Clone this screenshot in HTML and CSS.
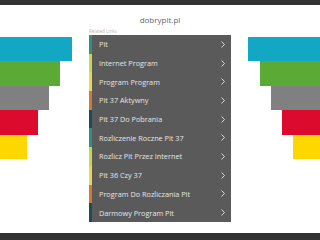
FILE: index.html
```html
<!DOCTYPE html>
<html>
<head>
  <title>dobrypit.pl</title>
  <link rel="stylesheet" href="styles.css">
</head>
<body>
  <div class="topbar"></div>
  <div class="page">
    <!-- paski po lewej -->
    <div class="bars bars-left">
      <div class="bar cyan"></div>
      <div class="bar green"></div>
      <div class="bar gray"></div>
      <div class="bar red"></div>
      <div class="bar yellow"></div>
    </div>

    <div class="center">
      <div class="domain">dobrypit.pl</div>
      <div class="related">Related Links</div>
      <ul class="links">
        <li class="s1">Pit <svg viewBox="0 0 4 7"><polyline points="0.5,0.5 3.5,3.5 0.5,6.5"/></svg></li>
        <li class="s2">Internet Program <svg viewBox="0 0 4 7"><polyline points="0.5,0.5 3.5,3.5 0.5,6.5"/></svg></li>
        <li class="s3">Program Program <svg viewBox="0 0 4 7"><polyline points="0.5,0.5 3.5,3.5 0.5,6.5"/></svg></li>
        <li class="s4">Pit 37 Aktywny <svg viewBox="0 0 4 7"><polyline points="0.5,0.5 3.5,3.5 0.5,6.5"/></svg></li>
        <li class="s5">Pit 37 Do Pobrania <svg viewBox="0 0 4 7"><polyline points="0.5,0.5 3.5,3.5 0.5,6.5"/></svg></li>
        <li class="s1">Rozliczenie Roczne Pit 37 <svg viewBox="0 0 4 7"><polyline points="0.5,0.5 3.5,3.5 0.5,6.5"/></svg></li>
        <li class="s2">Rozlicz Pit Przez Internet <svg viewBox="0 0 4 7"><polyline points="0.5,0.5 3.5,3.5 0.5,6.5"/></svg></li>
        <li class="s3">Pit 36 Czy 37 <svg viewBox="0 0 4 7"><polyline points="0.5,0.5 3.5,3.5 0.5,6.5"/></svg></li>
        <li class="s4">Program Do Rozliczania Pit <svg viewBox="0 0 4 7"><polyline points="0.5,0.5 3.5,3.5 0.5,6.5"/></svg></li>
        <li class="s5">Darmowy Program Pit <svg viewBox="0 0 4 7"><polyline points="0.5,0.5 3.5,3.5 0.5,6.5"/></svg></li>
      </ul>
    </div>

    <!-- paski po prawej -->
    <div class="bars bars-right">
      <div class="bar cyan"></div>
      <div class="bar green"></div>
      <div class="bar gray"></div>
      <div class="bar red"></div>
      <div class="bar yellow"></div>
    </div>
  </div>
  <div class="footer"></div>
</body>
</html>
```

FILE: styles.css
```css
html, body {
  margin: 0;
  padding: 0;
  background-color: #ffffff;
  font-family: "Open Sans", Arial, sans-serif;
  height: 240px;
  overflow: hidden;
}
.topbar {
  height: 5px;
  background-color: #333333;
}
.page {
  display: flex;
  height: 228px;
}
.bars {
  flex: 1;
  display: flex;
  flex-direction: column;
  padding-top: 32px;
}
.bars-left {
  align-items: flex-start;
}
.bars-right {
  align-items: flex-end;
}
.bar {
  height: 24.4px;
}
.bars-left .cyan { width: 72px; }
.bars-left .green { width: 60px; }
.bars-left .gray { width: 49px; }
.bars-left .red { width: 38px; }
.bars-left .yellow { width: 27px; }
.bars-right .cyan { width: 72px; }
.bars-right .green { width: 60px; }
.bars-right .gray { width: 49px; }
.bars-right .red { width: 38px; }
.bars-right .yellow { width: 27px; }
.cyan { background-color: #12a8c3; }
.green { background-color: #5aaa35; }
.gray { background-color: #808080; }
.red { background-color: #dc0a2d; }
.yellow { background-color: #fed700; }
.center {
  width: 142px;
}
.domain {
  text-align: center;
  color: #666666;
  font-size: 8px;
  line-height: 12px;
  margin-top: 9px;
}
.related {
  color: #b5b5b5;
  font-size: 4.5px;
  line-height: 6px;
  margin-top: 2px;
  margin-bottom: 1px;
}
.links {
  list-style: none;
  margin: 0;
  padding: 0;
  background-color: #5a5a5a;
}
.links li {
  height: 18.7px;
  display: flex;
  align-items: center;
  justify-content: space-between;
  padding-left: 7px;
  padding-right: 6px;
  border-left: 3px solid #333;
  color: #e6e6e6;
  font-size: 7.3px;
}
.links svg {
  width: 4px;
  height: 7px;
  fill: none;
  stroke: #e6e6e6;
  stroke-width: 0.9;
}
.s1 { border-left-color: #2f8f80 !important; }
.s2 { border-left-color: #c9d64c !important; }
.s3 { border-left-color: #e8d94a !important; }
.s4 { border-left-color: #d27a2e !important; }
.s5 { border-left-color: #1f4a58 !important; }
.footer {
  height: 7px;
  background-color: #333333;
}
```
